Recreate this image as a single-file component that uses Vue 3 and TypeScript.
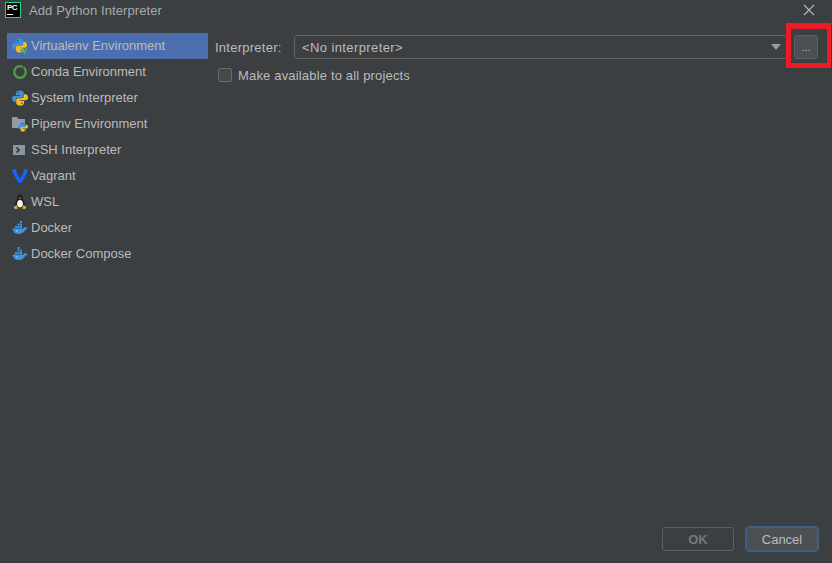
<template>
  <div class="dialog">
    <svg class="defs" width="0" height="0" aria-hidden="true">
      <defs>
        <symbol id="py" viewBox="0 0 16 16">
          <path fill="#3f92d6" d="M8 .5C5.200.5 4 1.600 4 3.100V5h4.300v.7H2.600C1.100 5.700 0 6.800 0 8.500s1 3.200 2.500 3.200H4V9.700c0-1.200.9-2 2-2h3.700c1.100 0 2-.8 2-1.800V3.100C11.700 1.600 10.400.5 8 .5Z" />
          <circle cx="6" cy="2.800" r=".8" fill="#3c3f41" />
          <path fill="#f2c21a" d="M8 15.500c2.800 0 4-1.100 4-2.600V11H7.700v-.7h5.700c1.500 0 2.600-1.100 2.600-2.800s-1-3.200-2.500-3.200H12v2c0 1.200-.9 2-2 2H6.300c-1.100 0-2 .8-2 1.800v2.800c0 1.500 1.300 2.600 3.700 2.600Z" />
          <circle cx="10" cy="13.200" r=".8" fill="#3c3f41" />
        </symbol>
        <symbol id="whale" viewBox="0 0 16 16">
          <path fill="#3d94e0" d="M.5 8.500h11.300c.3-1 1-1.400 1.800-1.400.2.600.8 1 2 .9-.4 1-1.200 1.600-2.300 1.700-1 2.600-3.300 4.300-6.500 4.300-3.500 0-5.800-1.800-6.300-5.500Z" />
          <circle cx="5" cy="11" r=".7" fill="#bfe0f8" />
        </symbol>
      </defs>
    </svg>

    <header class="title-bar">
      <div class="logo"><span class="logo-text">PC</span><span class="logo-bar"></span></div>
      <span class="title">Add Python Interpreter</span>
      <svg class="close" width="12" height="12" viewBox="0 0 12 12">
        <path d="M1 1l10 10M11 1L1 11" stroke="#b4b6b8" stroke-width="1.100" fill="none" />
      </svg>
    </header>

    <div class="body">
      <ul class="sidebar">
        <li v-for="(item, i) in items" :key="item.name" class="item" :class="{ selected: i === 0 }">
          <svg class="icon" width="16" height="16" viewBox="0 0 16 16">
            <template v-if="item.icon === 'venv'">
              <use href="#py" width="15" height="15" />
              <path d="M10.500 10l2 5 2-5" stroke="#62b543" stroke-width="1.300" fill="none" />
            </template>
            <use v-else-if="item.icon === 'python'" href="#py" width="16" height="16" />
            <g v-else-if="item.icon === 'conda'">
              <circle cx="8" cy="8" r="5.800" fill="none" stroke="#4f9e48" stroke-width="2.200" />
              <circle cx="8" cy="8" r="5.800" fill="none" stroke="#3c3f41" stroke-width="2.400" stroke-dasharray="1 35" transform="rotate(-60 8 8)" />
            </g>
            <template v-else-if="item.icon === 'pipenv'">
              <path fill="#8f9ca6" d="M0 1h5l1.500 2H13v9H0Z" />
              <use href="#py" x="6" y="6" width="10" height="10" />
            </template>
            <template v-else-if="item.icon === 'ssh'">
              <rect x="1" y="3" width="12" height="10" fill="#8a969f" />
              <path d="M4.500 5.500l2.500 2.500-2.500 2.500" stroke="#2f3133" stroke-width="1.700" fill="none" />
            </template>
            <path v-else-if="item.icon === 'vagrant'" fill="#1563ff" d="M.5 1.500L4.300 1v3l3.700 7 3.700-7V1l3.800.500V4L9.500 15h-3L.5 4Z" />
            <template v-else-if="item.icon === 'wsl'">
              <path fill="#1c1c1c" d="M8 .5c2 0 2.600 1.500 2.500 3.500 0 1.500 2.500 4 2.500 7 0 2-2 3-5 3s-5-1-5-3c0-3 2.500-5.500 2.500-7C5.400 2 6 .5 8 .5Z" />
              <ellipse cx="8" cy="9.800" rx="2.900" ry="3.800" fill="#f4f4f4" />
              <path fill="#eeb320" d="M6.800 4l1.200-.6 1.200.6-1.200 1ZM1.800 13l2.700-2 1.300 3.500-2.800.8ZM14.200 13l-2.700-2-1.300 3.500 2.800.8Z" />
            </template>
            <template v-else-if="item.icon === 'docker'">
              <use href="#whale" width="16" height="16" />
              <path fill="#3d94e0" d="M3 6h2v2H3ZM5.500 6h2v2h-2ZM8 6h2v2H8ZM5.500 3.500h2v2h-2ZM8 3.500h2v2H8ZM8 1h2v2H8Z" />
            </template>
            <template v-else>
              <use href="#whale" width="16" height="16" />
              <path fill="#3d94e0" d="M3 6h2v2H3ZM5.500 6h2v2h-2ZM8 6h2v2H8ZM5.500 3.500h2v2h-2ZM8 3.500h2v2H8ZM5.500 1h2v2h-2Z" />
            </template>
          </svg>
          <span class="item-name">{{ item.name }}</span>
        </li>
      </ul>

      <section class="content">
        <div class="row">
          <label class="label">Interpreter:</label>
          <div class="combo">
            <span class="combo-text">&lt;No interpreter&gt;</span>
            <span class="arrow"></span>
          </div>
          <button class="browse" type="button">...</button>
        </div>
        <label class="check-row">
          <span class="check"></span>
          <span class="check-text">Make available to all projects</span>
        </label>
      </section>
    </div>

    <footer class="footer">
      <button class="btn ok" type="button" disabled>OK</button>
      <button class="btn cancel" type="button">Cancel</button>
    </footer>

    <div class="highlight"></div>
  </div>
</template>

<script setup lang="ts">
interface SdkItem {
  name: string;
  icon: string;
}

const items: SdkItem[] = [
  { name: 'Virtualenv Environment', icon: 'venv' },
  { name: 'Conda Environment', icon: 'conda' },
  { name: 'System Interpreter', icon: 'python' },
  { name: 'Pipenv Environment', icon: 'pipenv' },
  { name: 'SSH Interpreter', icon: 'ssh' },
  { name: 'Vagrant', icon: 'vagrant' },
  { name: 'WSL', icon: 'wsl' },
  { name: 'Docker', icon: 'docker' },
  { name: 'Docker Compose', icon: 'compose' }
];
</script>

<style>
html,
body {
  margin: 0;
  background: #3c3f41;
}
</style>

<style scoped>
.dialog {
  position: relative;
  width: 832px;
  height: 563px;
  display: flex;
  flex-direction: column;
  overflow: hidden;
  background: #3c3f41;
  color: #bbbbbb;
  font-family: "Liberation Sans", "Noto Sans", sans-serif;
  font-size: 13px;
}

.defs {
  position: absolute;
}

.title-bar {
  height: 20px;
  padding: 0 17px 2px 5px;
  flex: none;
  display: flex;
  align-items: center;
}

.logo {
  width: 16px;
  height: 16px;
  box-sizing: border-box;
  border: 1px solid #21d789;
  background: #000;
  display: flex;
  flex-direction: column;
  padding: 0 1px;
}

.logo-text {
  color: #fff;
  font-size: 8px;
  line-height: 9px;
  font-weight: 700;
  letter-spacing: -0.5px;
}

.logo-bar {
  width: 6px;
  height: 1px;
  margin-top: 2px;
  background: #fff;
}

.title {
  margin-left: 8px;
  color: #a9abad;
  flex: 1;
  letter-spacing: 0.1px;
}

.body {
  flex: 1;
  display: flex;
  min-height: 0;
}

.sidebar {
  list-style: none;
  margin: 11px 0 0;
  padding: 0 0 0 7px;
  width: 201px;
  flex: none;
}

.item {
  height: 26px;
  display: flex;
  align-items: center;
  gap: 3px;
  padding-left: 5px;
}

.item.selected {
  background: #4b6eaf;
}

.icon {
  flex: none;
  margin-bottom: 1px;
}

.item-name {
  padding-bottom: 2px;
}

.content {
  flex: 1;
  padding: 13px 14px 0 7px;
}

.row {
  display: flex;
  align-items: center;
  height: 24px;
}

.label {
  width: 79px;
  flex: none;
  letter-spacing: 0.25px;
}

.combo {
  flex: 1;
  height: 22px;
  border: 1px solid #646464;
  border-radius: 3px;
  display: flex;
  align-items: center;
  justify-content: space-between;
  padding: 0 5px 0 7px;
}

.combo-text {
  letter-spacing: 0.4px;
}

.arrow {
  width: 0;
  height: 0;
  border-left: 5px solid transparent;
  border-right: 5px solid transparent;
  border-top: 6px solid #9a9da0;
}

.browse {
  width: 24px;
  height: 24px;
  margin-left: 7px;
  flex: none;
  padding: 0;
  background: #4c5052;
  border: 1px solid #5e6060;
  border-radius: 3px;
  color: #bbbbbb;
  font: inherit;
  font-size: 11px;
  line-height: 22px;
}

.check-row {
  display: flex;
  align-items: center;
  gap: 6px;
  margin: 5px 0 0 3px;
  height: 22px;
}

.check {
  width: 12px;
  height: 12px;
  border: 1px solid #6b6b6b;
  border-radius: 2px;
  background: #43494a;
}

.check-text {
  letter-spacing: 0.17px;
}

.footer {
  flex: none;
  display: flex;
  justify-content: flex-end;
  gap: 12px;
  padding: 0 14px 12px 0;
  align-items: center;
}

.btn {
  height: 24px;
  width: 72px;
  box-sizing: border-box;
  border-radius: 3px;
  font: inherit;
  padding: 0;
}

.ok {
  background: transparent;
  border: 1px solid #5e6060;
  color: #777777;
  font-weight: 700;
}

.cancel {
  background: #4c5052;
  border: 1px solid #3d6185;
  outline: 1px solid #3d6185;
  color: #bbbbbb;
}

.highlight {
  position: absolute;
  left: 786px;
  top: 23px;
  width: 45px;
  height: 45px;
  box-sizing: border-box;
  border-style: solid;
  border-color: #ed1c24;
  border-width: 6px 4px 5px 5px;
  pointer-events: none;
}
</style>
